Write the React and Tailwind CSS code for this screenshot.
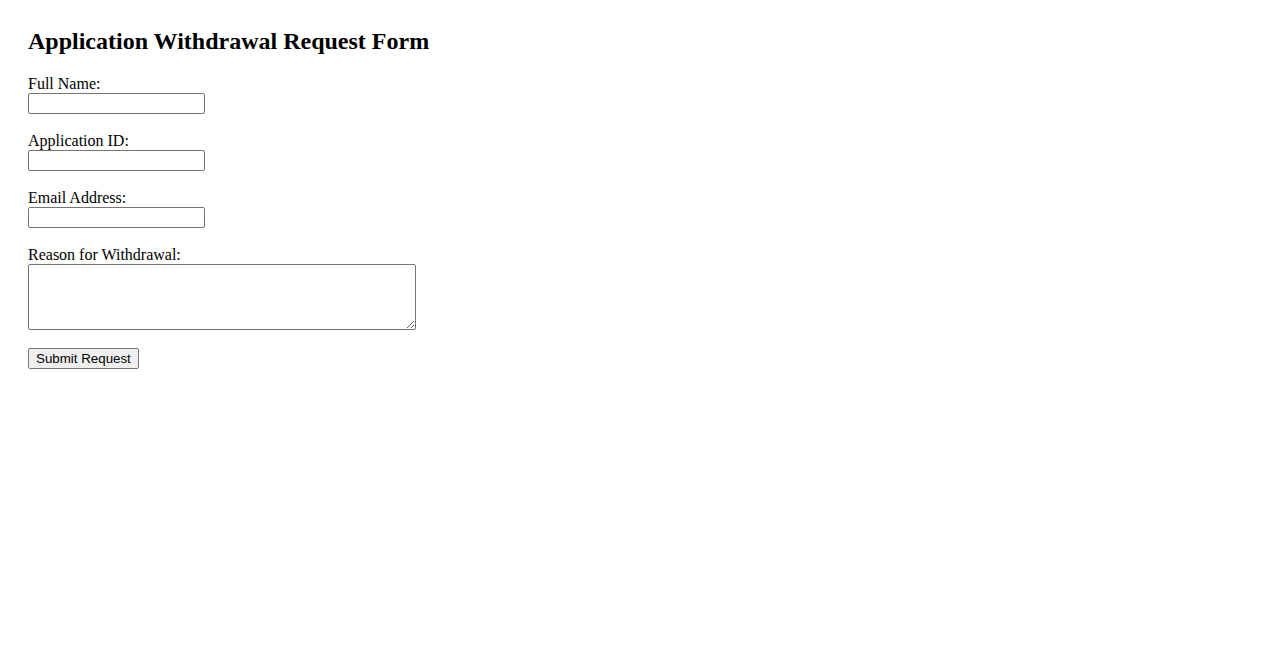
export default function App() {
  return (
    <div className="min-h-[650px] bg-white text-black pt-[27px] pl-[28px] font-['Liberation_Serif',serif]">
      <h2 className="text-[24px] font-bold leading-[28px] m-0">Application Withdrawal Request Form</h2>
      <form className="mt-[19px] flex flex-col items-start text-[16px]" onSubmit={(e) => e.preventDefault()}>
        {[
          ['fullName', 'Full Name:'],
          ['appId', 'Application ID:'],
          ['email', 'Email Address:'],
        ].map(([id, label]) => (
          <div key={id} className="flex flex-col items-start mb-[17px]">
            <label htmlFor={id} className="block leading-[18px] pt-px">{label}</label>
            <input
              id={id}
              type="text"
              className="block w-[177px] h-[21px] border border-[#767676] rounded-[2px] bg-white px-[2px] text-[13.33px] font-['Liberation_Sans',sans-serif]"
            />
          </div>
        ))}
        <div className="flex flex-col items-start">
          <label htmlFor="reason" className="block leading-[18px] pt-px">Reason for Withdrawal:</label>
          <textarea
            id="reason"
            className="block w-[388px] h-[66px] border border-[#767676] rounded-[2px] bg-white p-[2px] text-[13.33px] font-['Liberation_Mono',monospace] resize"
          />
        </div>
        <button
          type="submit"
          className="mt-[18px] h-[21px] px-[7px] border border-[#767676] rounded-[2px] bg-[#efefef] text-[13.33px] leading-[15px] text-black font-['Liberation_Sans',sans-serif]"
        >
          Submit Request
        </button>
      </form>
    </div>
  );
}
